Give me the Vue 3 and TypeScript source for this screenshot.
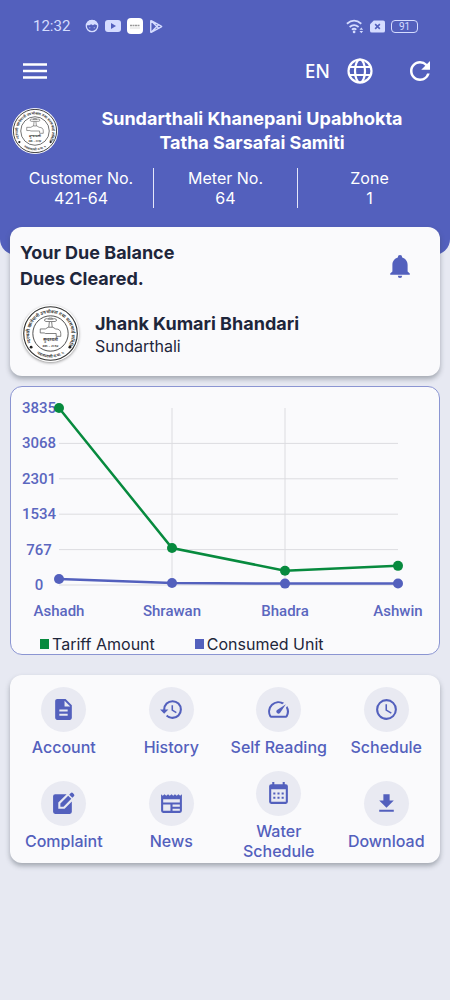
<script setup lang="ts">
interface Series {
  name: string
  color: string
  values: number[]
}

interface Action {
  label: string
  path: string
}

const meta = [
  { label: 'Customer No.', value: '421-64' },
  { label: 'Meter No.', value: '64' },
  { label: 'Zone', value: '1' },
]

const months = ['Ashadh', 'Shrawan', 'Bhadra', 'Ashwin']
const ticks = [3835, 3068, 2301, 1534, 767, 0]
const series: Series[] = [
  { name: 'Consumed Unit', color: '#5360bd', values: [130, 45, 30, 32] },
  { name: 'Tariff Amount', color: '#078a3e', values: [3835, 800, 310, 415] },
]
const legend = [...series].reverse()

const plot = { left: 48, right: 387, top: 21, bottom: 198 }
const xAt = (i: number) => plot.left + (i * (plot.right - plot.left)) / (months.length - 1)
const yAt = (v: number) => plot.bottom - (v / 3835) * (plot.bottom - plot.top)
const pointsOf = (s: Series) => s.values.map((v, i) => `${xAt(i)},${yAt(v)}`).join(' ')

const actions: Action[] = [
  {
    label: 'Account',
    path: 'M14 2H6c-1.1 0-2 .9-2 2v16c0 1.100.9 2 2 2h12c1.100 0 2-.9 2-2V8l-6-6zm2 16H8v-2h8v2zm0-4H8v-2h8v2zm-3-5V3.500L18.500 9H13z',
  },
  {
    label: 'History',
    path: 'M13.500 8H12v5l4.280 2.540.720-1.210-3.500-2.080V8M13 3a9 9 0 0 0-9 9H1l3.960 4.030L9 12H6a7 7 0 0 1 7-7 7 7 0 0 1 7 7 7 7 0 0 1-7 7c-1.930 0-3.680-.790-4.940-2.060l-1.420 1.420A8.900 8.900 0 0 0 13 21a9 9 0 0 0 9-9 9 9 0 0 0-9-9',
  },
  {
    label: 'Self Reading',
    path: 'M20.380 8.570l-1.230 1.850a8 8 0 0 1-.220 7.580H5.070A8 8 0 0 1 15.580 6.850l1.850-1.230A10 10 0 0 0 3.350 19a2 2 0 0 0 1.720 1h13.850a2 2 0 0 0 1.740-1 10 10 0 0 0-.270-10.440zm-9.790 6.840a2 2 0 0 0 2.830 0l5.660-8.490-8.490 5.660a2 2 0 0 0 0 2.830z',
  },
  {
    label: 'Schedule',
    path: 'M12 20a8 8 0 0 0 8-8 8 8 0 0 0-8-8 8 8 0 0 0-8 8 8 8 0 0 0 8 8m0-18a10 10 0 0 1 10 10 10 10 0 0 1-10 10C6.470 22 2 17.500 2 12A10 10 0 0 1 12 2m.500 5v5.250l4.500 2.670-.750 1.230L11 13V7h1.500',
  },
  {
    label: 'Complaint',
    path: 'M15 3L7 11V17H13L20 10V20Q20 22 18 22H4Q2 22 2 20V5Q2 3 4 3ZM9 12L16.500 4.500L19.500 7.500L12 15H9ZM17.500 3.500L19 2Q20 1 21 2L22 3Q23 4 22 5L20.500 6.500Z',
  },
  {
    label: 'News',
    path: 'M2 3l1.600 1.500L5.300 3l1.700 1.500L8.700 3l1.600 1.500L12 3l1.700 1.500L15.300 3 17 4.500 18.700 3l1.600 1.500L22 3v16q0 2-2 2H4q-2 0-2-2zM4 8v3h16V8zM4 13v6h7v-6zM13 13v2h7v-2zM13 17v2h7v-2z',
  },
  {
    label: 'Water Schedule',
    path: 'M6 1h2v2h8V1h2v2h1q2 0 2 2v15q0 2-2 2H5q-2 0-2-2V5q0-2 2-2h1zM5 8v12h14V8zM7 11h2v2H7zM11 11h2v2h-2zM15 11h2v2h-2zM7 15h2v2H7zM11 15h2v2h-2zM15 15h2v2h-2z',
  },
  { label: 'Download', path: 'M5 20h14v-2H5v2zM19 9h-4V3H9v6H5l7 7 7-7z' },
]
</script>

<template>
  <div class="app">
    <svg class="defs" aria-hidden="true">
      <defs>
        <path id="seal-top" d="M17 68A37 37 0 1 1 83 68" />
        <path id="seal-bottom" d="M22 82A43 43 0 0 0 78 82" />
        <symbol id="seal" viewBox="0 0 100 100">
          <circle cx="50" cy="50" r="50" fill="#fff" />
          <g fill="none" stroke="#333">
            <circle cx="50" cy="50" r="47" stroke-width="2" />
            <circle cx="50" cy="50" r="31" stroke-width="1.500" />
          </g>
          <g class="seal-text" fill="#222">
            <text font-size="8"><textPath href="#seal-top" startOffset="50%" text-anchor="middle">सुन्दरथली खानेपानी उपभोक्ता तथा सरसफाई समिति</textPath></text>
            <text font-size="7"><textPath href="#seal-bottom" startOffset="50%" text-anchor="middle">नवलपरासी न.पा. ५</textPath></text>
            <text x="50" y="64" font-size="7" text-anchor="middle">सुन्दरथली</text>
            <text x="50" y="73" font-size="6" text-anchor="middle">स्था. - २०६४</text>
          </g>
          <circle cx="16" cy="74" r="2.500" fill="#222" />
          <circle cx="84" cy="74" r="2.500" fill="#222" />
          <g fill="none" stroke="#555" stroke-width="1.300" stroke-linejoin="round">
            <path d="M32 42h9l5-3h8l5 3q9 0 9 8v5h-8v-5H41l-2-1h-7z" />
            <path d="M47 39l1-10h4l1 10M48 29h-6q-4-1-2-4 2-2 8 0h4q6-2 8 0 2 3-2 4h-6M47 25v-2h6v2" />
          </g>
        </symbol>
      </defs>
    </svg>

    <header class="header">
      <div class="status">
        <time>12:32</time>
        <div class="status-icons">
          <svg viewBox="0 0 16 16" width="14" height="14">
            <circle cx="8" cy="8" r="6.500" fill="none" stroke="currentColor" stroke-width="1.500" />
            <path d="M2 7Q2 1 8 1t6 6l-3-1-2 1-2-1-2 1z" fill="currentColor" />
            <path d="M5 10h1M10 10h1" stroke="currentColor" />
          </svg>
          <svg viewBox="0 0 16 12" width="16" height="12">
            <rect width="16" height="12" rx="3" fill="currentColor" />
            <path d="M6 3l5 3-5 3z" fill="#5360bd" />
          </svg>
          <svg viewBox="0 0 16 16" width="16" height="16">
            <rect width="16" height="16" rx="4" fill="#fff" />
            <path d="M3 7.500h10" stroke="#999" stroke-width="1.500" stroke-dasharray="2 .5" />
            <path d="M3 10h10" stroke="#ddd" />
          </svg>
          <svg viewBox="0 0 16 16" width="14" height="15">
            <path d="M2 2v12q0 1 1 .500l11-6q1-.5 0-1l-11-6Q2 1 2 2zM3 2l8 8M3 14l8-8" fill="none" stroke="currentColor" stroke-width="1.600" />
          </svg>
        </div>
        <div class="status-icons status-right">
          <svg viewBox="0 0 20 16" width="18" height="15">
            <g fill="none" stroke="currentColor" stroke-width="2">
              <path d="M1 5Q9-2 17 5M4 8.500q5-4 10 0M6.500 11.500q2.500-2 5 0" />
            </g>
            <circle cx="9" cy="14" r="1.500" fill="currentColor" />
            <path d="M15 11.500l2-2.500 2 2.500zM15 13l2 2.500 2-2.500z" fill="currentColor" />
          </svg>
          <svg viewBox="0 0 16 13" width="15" height="13">
            <path d="M4 0h10q2 0 2 2v9q0 2-2 2H2q-2 0-2-2V4z" fill="currentColor" />
            <path d="M5.500 4l5 5M10.500 4l-5 5" stroke="#5360bd" stroke-width="1.700" />
          </svg>
          <span class="battery">91</span>
        </div>
      </div>

      <div class="toolbar">
        <button type="button" aria-label="Menu">
          <svg viewBox="0 0 24 16" width="24" height="16">
            <path d="M0 1.500h24M0 8h24M0 14.500h24" stroke="#fff" stroke-width="2.400" />
          </svg>
        </button>
        <button type="button" class="lang" aria-label="Language EN">
          <span>EN</span>
          <svg viewBox="0 0 26 26" width="26" height="26">
            <g fill="none" stroke="#fff" stroke-width="2.200">
              <circle cx="13" cy="13" r="11.500" />
              <ellipse cx="13" cy="13" rx="5" ry="11.500" />
              <path d="M2.500 9h21M2.500 17h21" />
            </g>
          </svg>
        </button>
        <button type="button" aria-label="Refresh">
          <svg viewBox="4 4 16 16" width="20" height="20">
            <path d="M17.650 6.350A7.960 7.960 0 0 0 12 4c-4.420 0-8 3.580-8 8s3.580 8 8 8c3.730 0 6.840-2.550 7.730-6h-2.080A6 6 0 0 1 12 18c-3.310 0-6-2.690-6-6s2.690-6 6-6c1.660 0 3.140.690 4.220 1.780L13 11h7V4z" fill="#fff" />
          </svg>
        </button>
      </div>

      <div class="org">
        <svg class="org-logo" viewBox="0 0 100 100" role="img" aria-label="Samiti logo"><use href="#seal" /></svg>
        <h1>Sundarthali Khanepani Upabhokta<br />Tatha Sarsafai Samiti</h1>
      </div>

      <dl class="meta">
        <div v-for="m in meta" :key="m.label">
          <dt>{{ m.label }}</dt>
          <dd>{{ m.value }}</dd>
        </div>
      </dl>
    </header>

    <main class="content">
      <section class="card balance">
        <div class="balance-head">
          <h2>Your Due Balance<br />Dues Cleared.</h2>
          <button type="button" class="bell" aria-label="Notifications">
            <svg viewBox="2 1 20 23" width="22" height="25">
              <path d="M21 19v1H3v-1l2-2v-6c0-3.100 2.030-5.830 5-6.710V4a2 2 0 0 1 4 0v.290c2.970.880 5 3.610 5 6.710v6l2 2m-7 2a2 2 0 0 1-4 0" fill="#5360bd" />
            </svg>
          </button>
        </div>
        <div class="person">
          <svg class="avatar" viewBox="0 0 100 100" role="img" aria-label="Customer picture"><use href="#seal" /></svg>
          <div>
            <h3>Jhank Kumari Bhandari</h3>
            <p>Sundarthali</p>
          </div>
        </div>
      </section>

      <section class="chart">
        <svg viewBox="0 0 428 247" role="img" aria-label="Tariff amount and consumed unit by month">
          <g class="grid">
            <line v-for="t in ticks.slice(1)" :key="t" :x1="plot.left" :x2="plot.right" :y1="yAt(t)" :y2="yAt(t)" />
            <line v-for="i in 2" :key="'v' + i" :x1="xAt(i)" :x2="xAt(i)" :y1="plot.top" :y2="plot.bottom" />
          </g>
          <g class="axis">
            <text v-for="t in ticks" :key="t" x="28" :y="yAt(t) + 5">{{ t }}</text>
            <text v-for="(m, i) in months" :key="m" :x="xAt(i)" y="229">{{ m }}</text>
          </g>
          <g v-for="s in series" :key="s.name" :fill="s.color" :stroke="s.color">
            <polyline :points="pointsOf(s)" fill="none" stroke-width="2.500" />
            <circle v-for="(v, i) in s.values" :key="i" :cx="xAt(i)" :cy="yAt(v)" r="5" stroke="none" />
          </g>
        </svg>
        <ul class="legend">
          <li v-for="s in legend" :key="s.name">
            <i :style="{ background: s.color }"></i>{{ s.name }}
          </li>
        </ul>
      </section>

      <nav class="card actions">
        <button v-for="a in actions" :key="a.label" type="button">
          <span class="disc">
            <svg viewBox="0 0 24 24" width="25" height="25">
              <path :d="a.path" fill="currentColor" :fill-rule="a.label === 'News' || a.label === 'Water Schedule' ? 'evenodd' : 'nonzero'" />
            </svg>
          </span>
          <span class="label">{{ a.label }}</span>
        </button>
      </nav>
    </main>
  </div>
</template>

<style>
body {
  margin: 0;
  background: #e7e9f2;
}
</style>

<style scoped>
.app {
  min-height: 100vh;
  background: #e7e9f2;
  color: #1e263b;
  font-family: Inter, "Open Sans", sans-serif;
  font-size: 16px;
}

.defs {
  position: absolute;
  width: 0;
  height: 0;
}

.seal-text {
  font-family: "Noto Sans", sans-serif;
  font-weight: 600;
}

svg {
  display: block;
  flex-shrink: 0;
}

h1, h2, h3, p, dl, dd, ul {
  margin: 0;
  padding: 0;
}

button {
  border: 0;
  padding: 0;
  background: none;
  color: inherit;
  font: inherit;
  cursor: pointer;
}

.header {
  padding-bottom: 47px;
  border-radius: 0 0 16px 16px;
  background: #5360bd;
  color: #fff;
}

.status {
  display: flex;
  align-items: center;
  height: 52px;
  padding: 0 32px 0 33px;
  color: #d5dcff;
  font-family: Roboto, sans-serif;
  font-size: 15px;
}

.status-icons {
  display: flex;
  align-items: center;
  gap: 6px;
  margin-left: 15px;
}

.status-right {
  margin-left: auto;
}

.battery {
  width: 25px;
  border: 1px solid currentColor;
  border-radius: 4px;
  font-size: 10px;
  line-height: 11px;
  text-align: center;
}

.toolbar {
  display: flex;
  align-items: center;
  height: 38px;
  padding: 0 20px 0 23px;
}

.lang {
  display: flex;
  align-items: center;
  gap: 17px;
  margin: 0 37px 0 auto;
  font-family: "Noto Sans", sans-serif;
  font-size: 19px;
  font-weight: 500;
}

.org {
  display: flex;
  align-items: center;
  padding: 16px 4px 0 12px;
}

.org-logo {
  width: 46px;
  height: 46px;
}

.org h1 {
  flex: 1;
  padding: 1px 16px 0;
  font-size: 18px;
  font-weight: 700;
  line-height: 24px;
  text-align: center;
}

.meta {
  display: grid;
  grid-template-columns: repeat(3, 1fr);
  padding: 13px 9px 0;
  line-height: 20px;
  text-align: center;
}

.meta div + div {
  border-left: 1px solid #e4e7fa;
}

.content {
  position: relative;
  display: grid;
  gap: 10px;
  margin-top: -28px;
  padding: 0 10px 20px;
}

.card {
  border-radius: 12px;
  background: #fafafc;
  box-shadow: 0 3px 5px rgba(60, 70, 80, 0.4);
}

.balance {
  padding: 13px 10px;
}

.balance-head {
  display: flex;
  align-items: center;
  justify-content: space-between;
}

.balance h2 {
  font-size: 18px;
  font-weight: 700;
  line-height: 26px;
}

.bell {
  margin-right: 19px;
}

.person {
  display: flex;
  align-items: center;
  gap: 16px;
  padding: 13px 2px 1px;
}

.avatar {
  width: 57px;
  height: 57px;
  border-radius: 50%;
  box-shadow: 0 1px 3px rgba(0, 0, 0, 0.4);
}

.person h3 {
  font-size: 18px;
  font-weight: 700;
  line-height: 24px;
}

.person p {
  line-height: 20px;
}

.chart {
  margin-bottom: 10px;
  border: 1px solid #8b95d2;
  border-radius: 12px;
  background: #fafafc;
}

.chart svg {
  width: 100%;
  height: auto;
}

.grid line {
  stroke: #dcdce0;
  stroke-width: 1;
}

.axis text {
  fill: #5b67bf;
  font-family: Roboto, sans-serif;
  font-size: 15px;
  font-weight: 500;
  text-anchor: middle;
}

.legend {
  display: flex;
  flex-wrap: wrap;
  gap: 0 40px;
  padding: 0 29px;
  line-height: 20px;
  list-style: none;
}

.legend li {
  display: flex;
  align-items: center;
  gap: 3px;
}

.legend i {
  width: 9px;
  height: 10px;
}

.actions {
  display: grid;
  grid-template-columns: repeat(4, 1fr);
  grid-auto-rows: 94px;
}

.actions button {
  display: flex;
  flex-direction: column;
  align-items: center;
  justify-content: center;
  gap: 5px;
  color: #5360bd;
  font-weight: 500;
  line-height: 20px;
}

.disc {
  display: grid;
  place-items: center;
  width: 45px;
  height: 45px;
  border-radius: 50%;
  background: #e9eaf2;
}
</style>
